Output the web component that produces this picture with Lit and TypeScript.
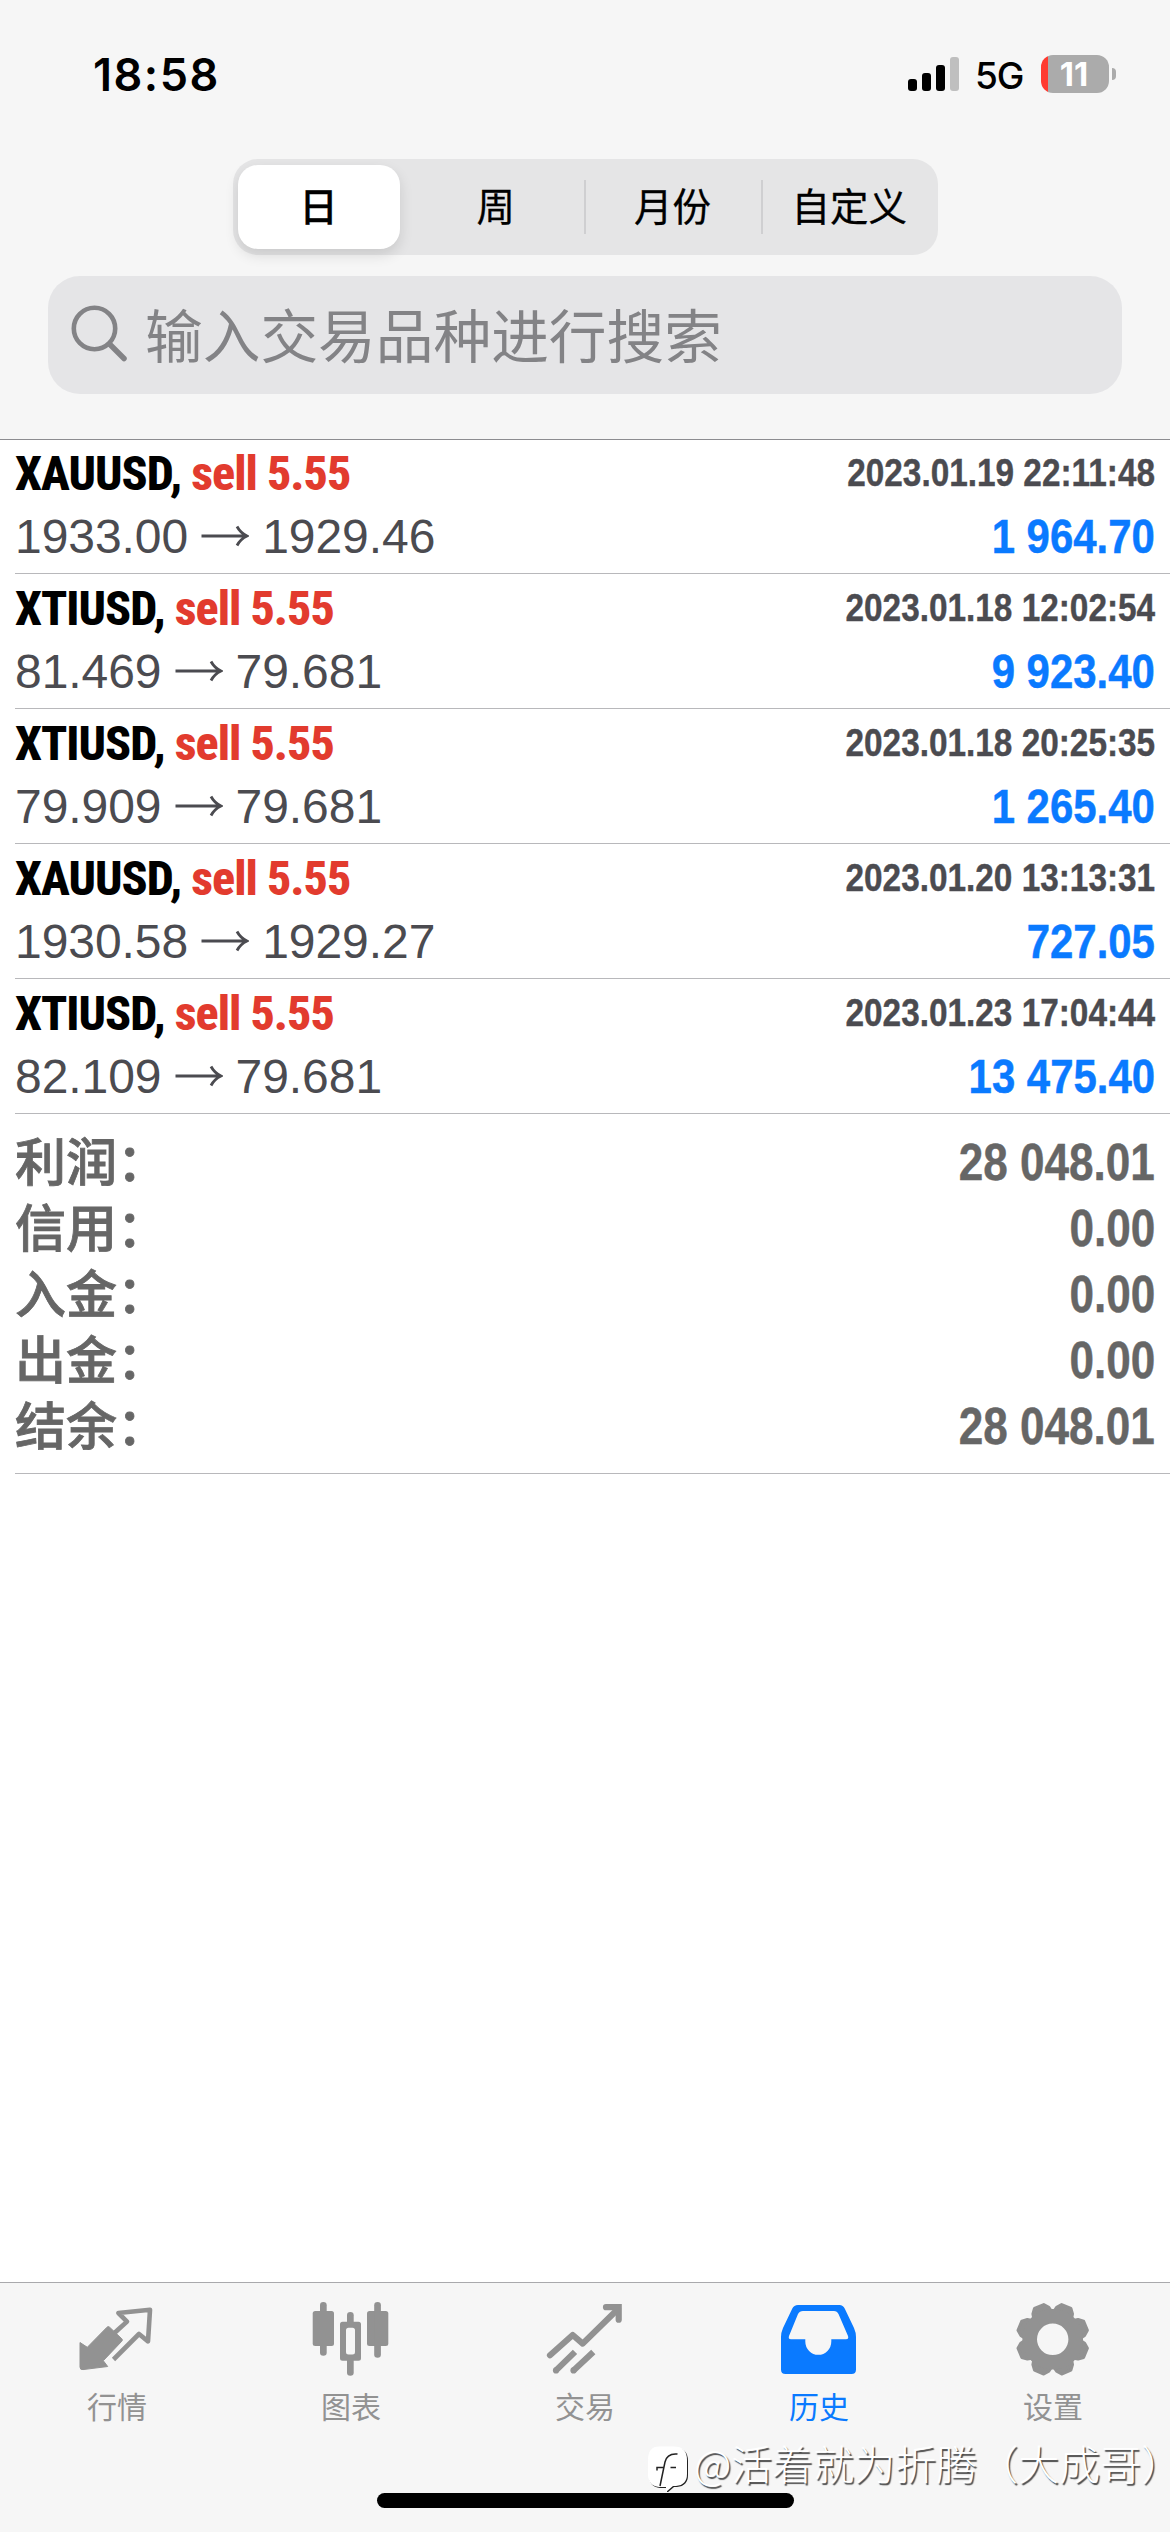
import { LitElement, html, svg, css } from 'lit';
import { customElement, property, state } from 'lit/decorators.js';
import { classMap } from 'lit/directives/class-map.js';

interface Deal {
  symbol: string;
  side: string;
  open: string;
  close: string;
  time: string;
  profit: string;
}

const DEALS: Deal[] = [
  { symbol: 'XAUUSD', side: 'sell 5.55', open: '1933.00', close: '1929.46', time: '2023.01.19 22:11:48', profit: '1 964.70' },
  { symbol: 'XTIUSD', side: 'sell 5.55', open: '81.469', close: '79.681', time: '2023.01.18 12:02:54', profit: '9 923.40' },
  { symbol: 'XTIUSD', side: 'sell 5.55', open: '79.909', close: '79.681', time: '2023.01.18 20:25:35', profit: '1 265.40' },
  { symbol: 'XAUUSD', side: 'sell 5.55', open: '1930.58', close: '1929.27', time: '2023.01.20 13:13:31', profit: '727.05' },
  { symbol: 'XTIUSD', side: 'sell 5.55', open: '82.109', close: '79.681', time: '2023.01.23 17:04:44', profit: '13 475.40' },
];

const TOTALS: [string, string][] = [
  ['利润', '28 048.01'],
  ['信用', '0.00'],
  ['入金', '0.00'],
  ['出金', '0.00'],
  ['结余', '28 048.01'],
];

const TOOTH_ANGLES = [22.5, 67.5, 112.5, 157.5, 202.5, 247.5, 292.5, 337.5];

const ICONS = {
  quotes: svg`
    <path d="M5 44.5L12.3 49.3L32 29.2Q33.3 28 34.6 29.2L46.8 40.8Q48 42 46.8 43.2L28.3 62.7L32.7 68.5L8 71.6Q5 72 5 69Z" fill="currentColor" stroke="currentColor" stroke-width="1" stroke-linejoin="round"/>
    <path d="M39.500 35L43.800 31L52 23.6L43.4 15L75 11.8L73 43.4L64 36L38.5 61.5" fill="none" stroke="currentColor" stroke-width="4.6" stroke-linejoin="round"/>`,
  chart: svg`
    <g fill="currentColor">
      <rect x="3.7" y="13" width="21.3" height="35" rx="2.5"/><rect x="11" y="4" width="6.7" height="53.7" rx="3.3"/>
      <rect x="58" y="13" width="21.3" height="35" rx="2.5"/><rect x="65.2" y="4" width="6.7" height="55.7" rx="3.3"/>
      <rect x="38" y="14" width="6.7" height="14" rx="3.3"/><rect x="38" y="58" width="6.7" height="19.7" rx="3.3"/>
      <path fill-rule="evenodd" d="M33.5 23.7H49.5Q52 23.7 52 26.2V60.2Q52 62.7 49.5 62.7H33.5Q31 62.7 31 60.2V26.2Q31 23.7 33.5 23.7ZM39.5 29.7Q37 29.7 37 32.2V54Q37 56.5 39.5 56.5H43.5Q46 56.5 46 54V32.2Q46 29.7 43.5 29.7Z"/>
    </g>`,
  trade: svg`
    <g fill="none" stroke="currentColor" stroke-width="6.2" stroke-linejoin="round">
      <path d="M7 57.3L29.7 37L39.7 45.6L75 11" stroke-linecap="round"/>
      <path d="M63 9.2H75.7V21.7" stroke-linecap="round" stroke-linejoin="miter"/>
      <path d="M13 72.4L32 53.9M30.5 72.4L50.3 54"/>
    </g>
    <g fill="currentColor"><circle cx="13" cy="72.4" r="3.1"/><circle cx="30.5" cy="72.4" r="3.1"/></g>`,
  history: svg`
    <path fill="currentColor" fill-rule="evenodd" d="M21 7H62.5Q66 7 67.7 10.5L77 30Q79 34.5 79 39V71.5Q79 76 74.5 76H8.5Q4 76 4 71.5V39Q4 34.5 6 30L15.3 10.5Q17 7 21 7ZM26 13Q22.5 13 21 16L12 38Q11 41.3 14 41.3H28.3V43.5A13 13.3 0 0 0 54.3 43.5V41.3H69Q72 41.3 71 38L61.5 16Q60 13 57 13Z"/>`,
  settings: svg`
    <g fill="currentColor" stroke="currentColor" stroke-width="3" stroke-linejoin="round">
      ${TOOTH_ANGLES.map((a) => svg`<path d="M-10 -24L-8.600 -31L-5 -35.500L5 -35.500L8.600 -31L10 -24Z" transform="translate(41.7 41.3) rotate(${a})"/>`)}
    </g>
    <circle cx="41.7" cy="41.3" r="23" fill="none" stroke="currentColor" stroke-width="14.6"/>`,
};

const TABS: { id: keyof typeof ICONS; label: string }[] = [
  { id: 'quotes', label: '行情' },
  { id: 'chart', label: '图表' },
  { id: 'trade', label: '交易' },
  { id: 'history', label: '历史' },
  { id: 'settings', label: '设置' },
];

@customElement('status-bar')
export class StatusBar extends LitElement {
  static styles = css`
    :host { display: flex; justify-content: space-between; box-sizing: border-box; height: 159px; padding: 45px 54px 0 93px; color: #000; }
    .time { font: 600 45px/60px Inter, sans-serif; letter-spacing: 1.5px; }
    .right { display: flex; align-items: center; height: 58px; }
    .signal { width: 52px; height: 34px; margin-right: 15px; }
    .net { width: 66px; padding-top: 3px; font: 500 37px/55px Inter, sans-serif; letter-spacing: -1px; }
    .battery { box-sizing: border-box; width: 68px; height: 38px; border-radius: 12px; background: linear-gradient(90deg, #ff3b30 7px, #ababab 7px); color: #fff; text-align: center; font: 700 33px/38px Inter, sans-serif; padding-right: 2px; }
    .nub { width: 4px; height: 12px; margin-left: 3px; border-radius: 0 6px 6px 0; background: #ababab; }
  `;
  render() {
    return html`
      <span class="time">18:58</span>
      <div class="right">
        <svg class="signal" viewBox="0 0 52 34">
          <rect x="0" y="22" width="9" height="12" rx="3"/>
          <rect x="14" y="16" width="9" height="18" rx="3"/>
          <rect x="28" y="8" width="9" height="26" rx="3"/>
          <rect x="42" y="0" width="9" height="34" rx="3" fill="#bfbfbf"/>
        </svg>
        <span class="net">5G</span>
        <span class="battery">11</span><span class="nub"></span>
      </div>`;
  }
}

@customElement('period-picker')
export class PeriodPicker extends LitElement {
  @state() private selected = 0;
  static styles = css`
    :host { display: flex; box-sizing: border-box; width: 705px; height: 96px; margin: 0 auto; padding: 6px 0 6px 5px; border-radius: 25px; background: #e5e5e6; font: 400 38.5px/79px "Noto Sans CJK SC", sans-serif; color: #000; }
    .seg { position: relative; flex: 1; display: flex; justify-content: center; }
    .seg span { width: 162px; text-align: center; border-radius: 20px; -webkit-text-stroke: 0.3px #000; }
    .seg.on { flex: 0 0 170px; justify-content: flex-start; }
    .on span { font-weight: 500; background: #fff; box-shadow: 0 6px 14px rgba(0, 0, 0, 0.12); }
    .divided::before { content: ''; position: absolute; left: 0; top: 15px; width: 2px; height: 54px; background: #cfcfd1; }
  `;
  render() {
    return ['日', '周', '月份', '自定义'].map((t, i) => html`
      <div class=${classMap({ seg: true, on: i === this.selected, divided: i > this.selected + 1 })}
        @click=${() => { this.selected = i; }}><span>${t}</span></div>`);
  }
}

@customElement('deal-row')
export class DealRow extends LitElement {
  @property({ attribute: false }) deal!: Deal;
  static styles = css`
    :host { display: flex; flex-direction: column; gap: 2px; box-sizing: border-box; height: 135px; margin-left: 15px; padding: 5px 15px 0 0; border-bottom: 1px solid #b8b8bb; white-space: nowrap; }
    .line { display: flex; justify-content: space-between; align-items: baseline; height: 60px; line-height: 60px; }
    .title { font-family: "Roboto Condensed", "Liberation Sans", sans-serif; font-weight: 800; font-size: 48px; color: #000; letter-spacing: -1px; }
    .side { color: #e23b2e; }
    .time { font: 700 39px/60px "Liberation Sans", sans-serif; color: #4b4b50; transform: translateY(-4px) scaleX(0.855); transform-origin: 100% 50%; -webkit-text-stroke: 0.4px #4b4b50; }
    .price { display: flex; align-items: baseline; font: 400 48px/60px "Liberation Sans", sans-serif; color: #4b4b50; letter-spacing: -0.05px; }
    .arrow { width: 48px; height: 22px; margin: 0 13px; align-self: center; transform: translateY(-1px); }
    .profit { font: 700 49px/60px "Liberation Sans", sans-serif; color: #0a7aff; transform: scaleX(0.855); transform-origin: 100% 50%; -webkit-text-stroke: 0.5px #0a7aff; }
  `;
  render() {
    const d = this.deal;
    return html`
      <div class="line">
        <span class="title">${d.symbol}, <span class="side">${d.side}</span></span>
        <span class="time">${d.time}</span>
      </div>
      <div class="line">
        <span class="price">${d.open}<svg class="arrow" viewBox="0 0 48 22" fill="none" stroke="currentColor" stroke-width="2.8"><path d="M0.500 11H45.500M36 1.500Q39.500 8 46 11Q39.500 14 36 20.500"/></svg>${d.close}</span>
        <span class="profit">${d.profit}</span>
      </div>`;
  }
}

@customElement('tab-bar')
export class TabBar extends LitElement {
  @state() private active = 'history';
  static styles = css`
    :host { display: flex; flex-direction: column; justify-content: space-between; align-items: center; box-sizing: border-box; height: 250px; padding: 15px 0 24px; border-top: 1px solid #a9a9ac; background: #f6f6f6; }
    .tabs { display: grid; grid-template-columns: repeat(5, 1fr); width: 100%; }
    .tab { display: flex; flex-direction: column; align-items: center; gap: 5px; color: #929292; font: 400 30px/36px "Noto Sans CJK SC", sans-serif; }
    .tab.active { color: #0a7aff; }
    .icon { width: 84px; height: 84px; }
    .home { width: 417px; height: 15px; border-radius: 8px; background: #000; }
  `;
  render() {
    return html`
      <nav class="tabs">${TABS.map((t) => html`
        <div class=${classMap({ tab: true, active: t.id === this.active })} @click=${() => { this.active = t.id; }}>
          <svg class="icon" viewBox="0 0 84 84">${ICONS[t.id]}</svg><span>${t.label}</span>
        </div>`)}</nav>
      <div class="home"></div>`;
  }
}

@customElement('app-root')
export class AppRoot extends LitElement {
  static styles = css`
    :host { display: flex; flex-direction: column; position: relative; width: 1170px; height: 2532px; overflow: hidden; background: #fff; font-family: "Liberation Sans", "Noto Sans CJK SC", sans-serif; }
    .header { box-sizing: border-box; height: 440px; background: #f6f6f6; border-bottom: 1px solid #8c8c90; }
    .search { display: flex; align-items: center; box-sizing: border-box; width: 1074px; height: 118px; margin: 21px auto 0; padding: 0 0 4px 22px; border-radius: 32px; background: #e5e5e7; color: #838386; font: 400 57.7px/114px "Noto Sans CJK SC", sans-serif; }
    .glass { width: 60px; height: 60px; margin-right: 15px; }
    .deals { margin-top: -1px; }
    .totals { margin-left: 15px; padding: 16px 15px 13px 0; border-bottom: 1px solid #b8b8bb; color: #666; font-weight: 700; font-size: 51px; line-height: 66px; }
    .total { display: flex; justify-content: space-between; height: 66px; white-space: nowrap; }
    .name { padding-top: 1px; font-weight: 500; -webkit-text-stroke: 0.8px #666; }
    .sum { transform: scaleX(0.865); transform-origin: 100% 50%; -webkit-text-stroke: 0.4px #666; }
    .space { flex: 1; }
    .mark { position: absolute; left: 646px; top: 2432px; display: flex; align-items: center; height: 60px; color: #fff; font: 300 41px/60px "Noto Sans CJK SC", sans-serif; white-space: nowrap; text-shadow: 1.5px 1.5px 1px rgba(0, 0, 0, 0.7); }
    .logo { width: 48px; height: 60px; }
    .half { font-feature-settings: "halt" 1; }
  `;
  render() {
    return html`
      <header class="header">
        <status-bar></status-bar>
        <period-picker></period-picker>
        <div class="search">
          <svg class="glass" viewBox="0 0 60 60" fill="none" stroke="currentColor" stroke-width="4.6" stroke-linecap="round"><circle cx="24.5" cy="25.5" r="20.7"/><path d="M40 41.500L54 55.500" stroke-width="5.5"/></svg>
          <span>输入交易品种进行搜索</span>
        </div>
      </header>
      <section class="deals">${DEALS.map((d) => html`<deal-row .deal=${d}></deal-row>`)}</section>
      <section class="totals">${TOTALS.map(([k, v]) => html`<div class="total"><span class="name">${k}：</span><span class="sum">${v}</span></div>`)}</section>
      <div class="space"></div>
      <tab-bar></tab-bar>
      <div class="mark">
        <svg class="logo" viewBox="0 0 48 60">
          <path d="M14 16H29Q42 16 42 29V43Q42 54 31 55H28L21 61V56H14Q3 55 3 43V29Q3 16 14 16Z" fill="#222"/>
          <path d="M13 14.500H28Q41 14.500 41 28V42Q41 53 30 54H27L20 60V55H13Q2 54 2 42V28Q2 14.500 13 14.500Z" fill="#fff"/>
          <path d="M31.500 22Q21 21 19 30L14 54M11 38.500V35.500H17.500M24.500 35.500H30" fill="none" stroke="#222" stroke-width="1.500"/>
        </svg>
        <span>@活着就为折腾（大成哥<span class="half">）</span></span>
      </div>`;
  }
}
